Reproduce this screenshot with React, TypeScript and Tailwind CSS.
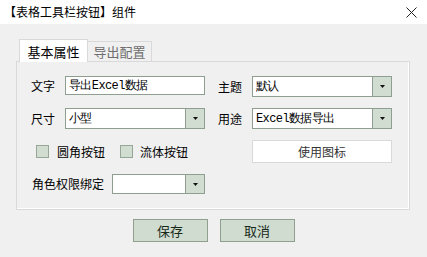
import React from 'react';

const cjk = "font-['Noto_Sans_CJK_SC',sans-serif]";
const mono = 'font-mono tracking-[-0.6px]';

export default function App() {
  return (
    <div className={`w-[427px] h-[257px] bg-[#f0f0f0] text-[12px] text-black ${cjk}`}>
      <div className="h-[24px] bg-white flex items-center justify-between pl-[4px] pr-[10px]">
        <span className="leading-none">【表格工具栏按钮】组件</span>
        <svg width="11" height="11" viewBox="0 0 11 11">
          <path d="M0.5 0.5 L10.5 10.5 M10.5 0.5 L0.5 10.5" stroke="#222" strokeWidth="1" />
        </svg>
      </div>

      <div className="pt-[14px] pl-[16px] pr-[17px]">
        <div className="flex items-end pl-[3px]">
          <div className="w-[69px] h-[23px] bg-white border border-b-0 border-[#d9d9d9] flex items-center justify-center text-[13px] leading-none relative top-[1px]">
            基本属性
          </div>
          <div className="w-[64px] h-[20px] bg-[#f0f0f0] border border-l-0 border-b-0 border-[#d9d9d9] flex items-center justify-center text-[13px] leading-none text-[#6e6e6e]">
            导出配置
          </div>
        </div>

        <div className="h-[149px] border border-[#d9d9d9] shadow-[inset_-1px_-1px_0_#ffffff] pl-[14px] pt-[14px] flex flex-col gap-[11px]">
          <div className="flex items-start h-[21px]">
            <span className="w-[34px] h-[19px] flex items-center">文字</span>
            <div className={`w-[140px] h-[19px] bg-white border border-[#8f9f8f] flex items-center pl-[3px] ${mono}`}>
              导出Excel数据
            </div>
            <span className="ml-[13px] w-[34px] h-[21px] flex items-center">主题</span>
            <Select width="w-[140px]" value="默认" />
          </div>

          <div className="flex items-start h-[21px]">
            <span className="w-[34px] h-[21px] flex items-center">尺寸</span>
            <Select width="w-[140px]" value="小型" />
            <span className="ml-[13px] w-[34px] h-[21px] flex items-center">用途</span>
            <Select width="w-[140px]" value="Excel数据导出" />
          </div>

          <div className="flex items-center h-[23px]">
            <div className="w-[221px] flex items-center pl-[5px]">
              <Check />
              <span className="ml-[8px]">圆角按钮</span>
              <span className="ml-[15px]" />
              <Check />
              <span className="ml-[7px]">流体按钮</span>
            </div>
            <div className="w-[140px] h-[23px] bg-white border border-[#d9d9d9] flex items-center justify-center text-[#333]">
              使用图标
            </div>
          </div>

          <div className="flex items-center h-[20px]">
            <span className="w-[81px] pl-[1px]">角色权限绑定</span>
            <Select width="w-[93px]" value="" h="h-[20px]" />
          </div>
        </div>

        <div className="flex justify-center gap-[12px] mt-[9px] pl-[1px]">
          <button className="w-[75px] h-[23px] bg-[#cfdccf] border border-[#8fa08f] flex items-center justify-center text-[13px] text-[#1a2a1a]">
            保存
          </button>
          <button className="w-[75px] h-[23px] bg-[#cfdccf] border border-[#8fa08f] flex items-center justify-center text-[13px] text-[#1a2a1a]">
            取消
          </button>
        </div>
      </div>
    </div>
  );
}

function Select({ width, value, h = 'h-[21px]' }: { width: string; value: string; h?: string }) {
  return (
    <div className={`${width} ${h} bg-white border border-[#8f9f8f] flex items-stretch`}>
      <div className={`flex-1 flex items-center pl-[3px] ${mono}`}>{value}</div>
      <div className="w-[19px] bg-[#d0ddd0] border-l border-[#8f9f8f] flex items-center justify-center">
        <svg width="5" height="3" viewBox="0 0 5 3">
          <path d="M0 0 H5 L2.5 3 Z" fill="#111" />
        </svg>
      </div>
    </div>
  );
}

function Check() {
  return <div className="w-[13px] h-[13px] bg-[#d0ddd0] border border-[#97a797]" />;
}
